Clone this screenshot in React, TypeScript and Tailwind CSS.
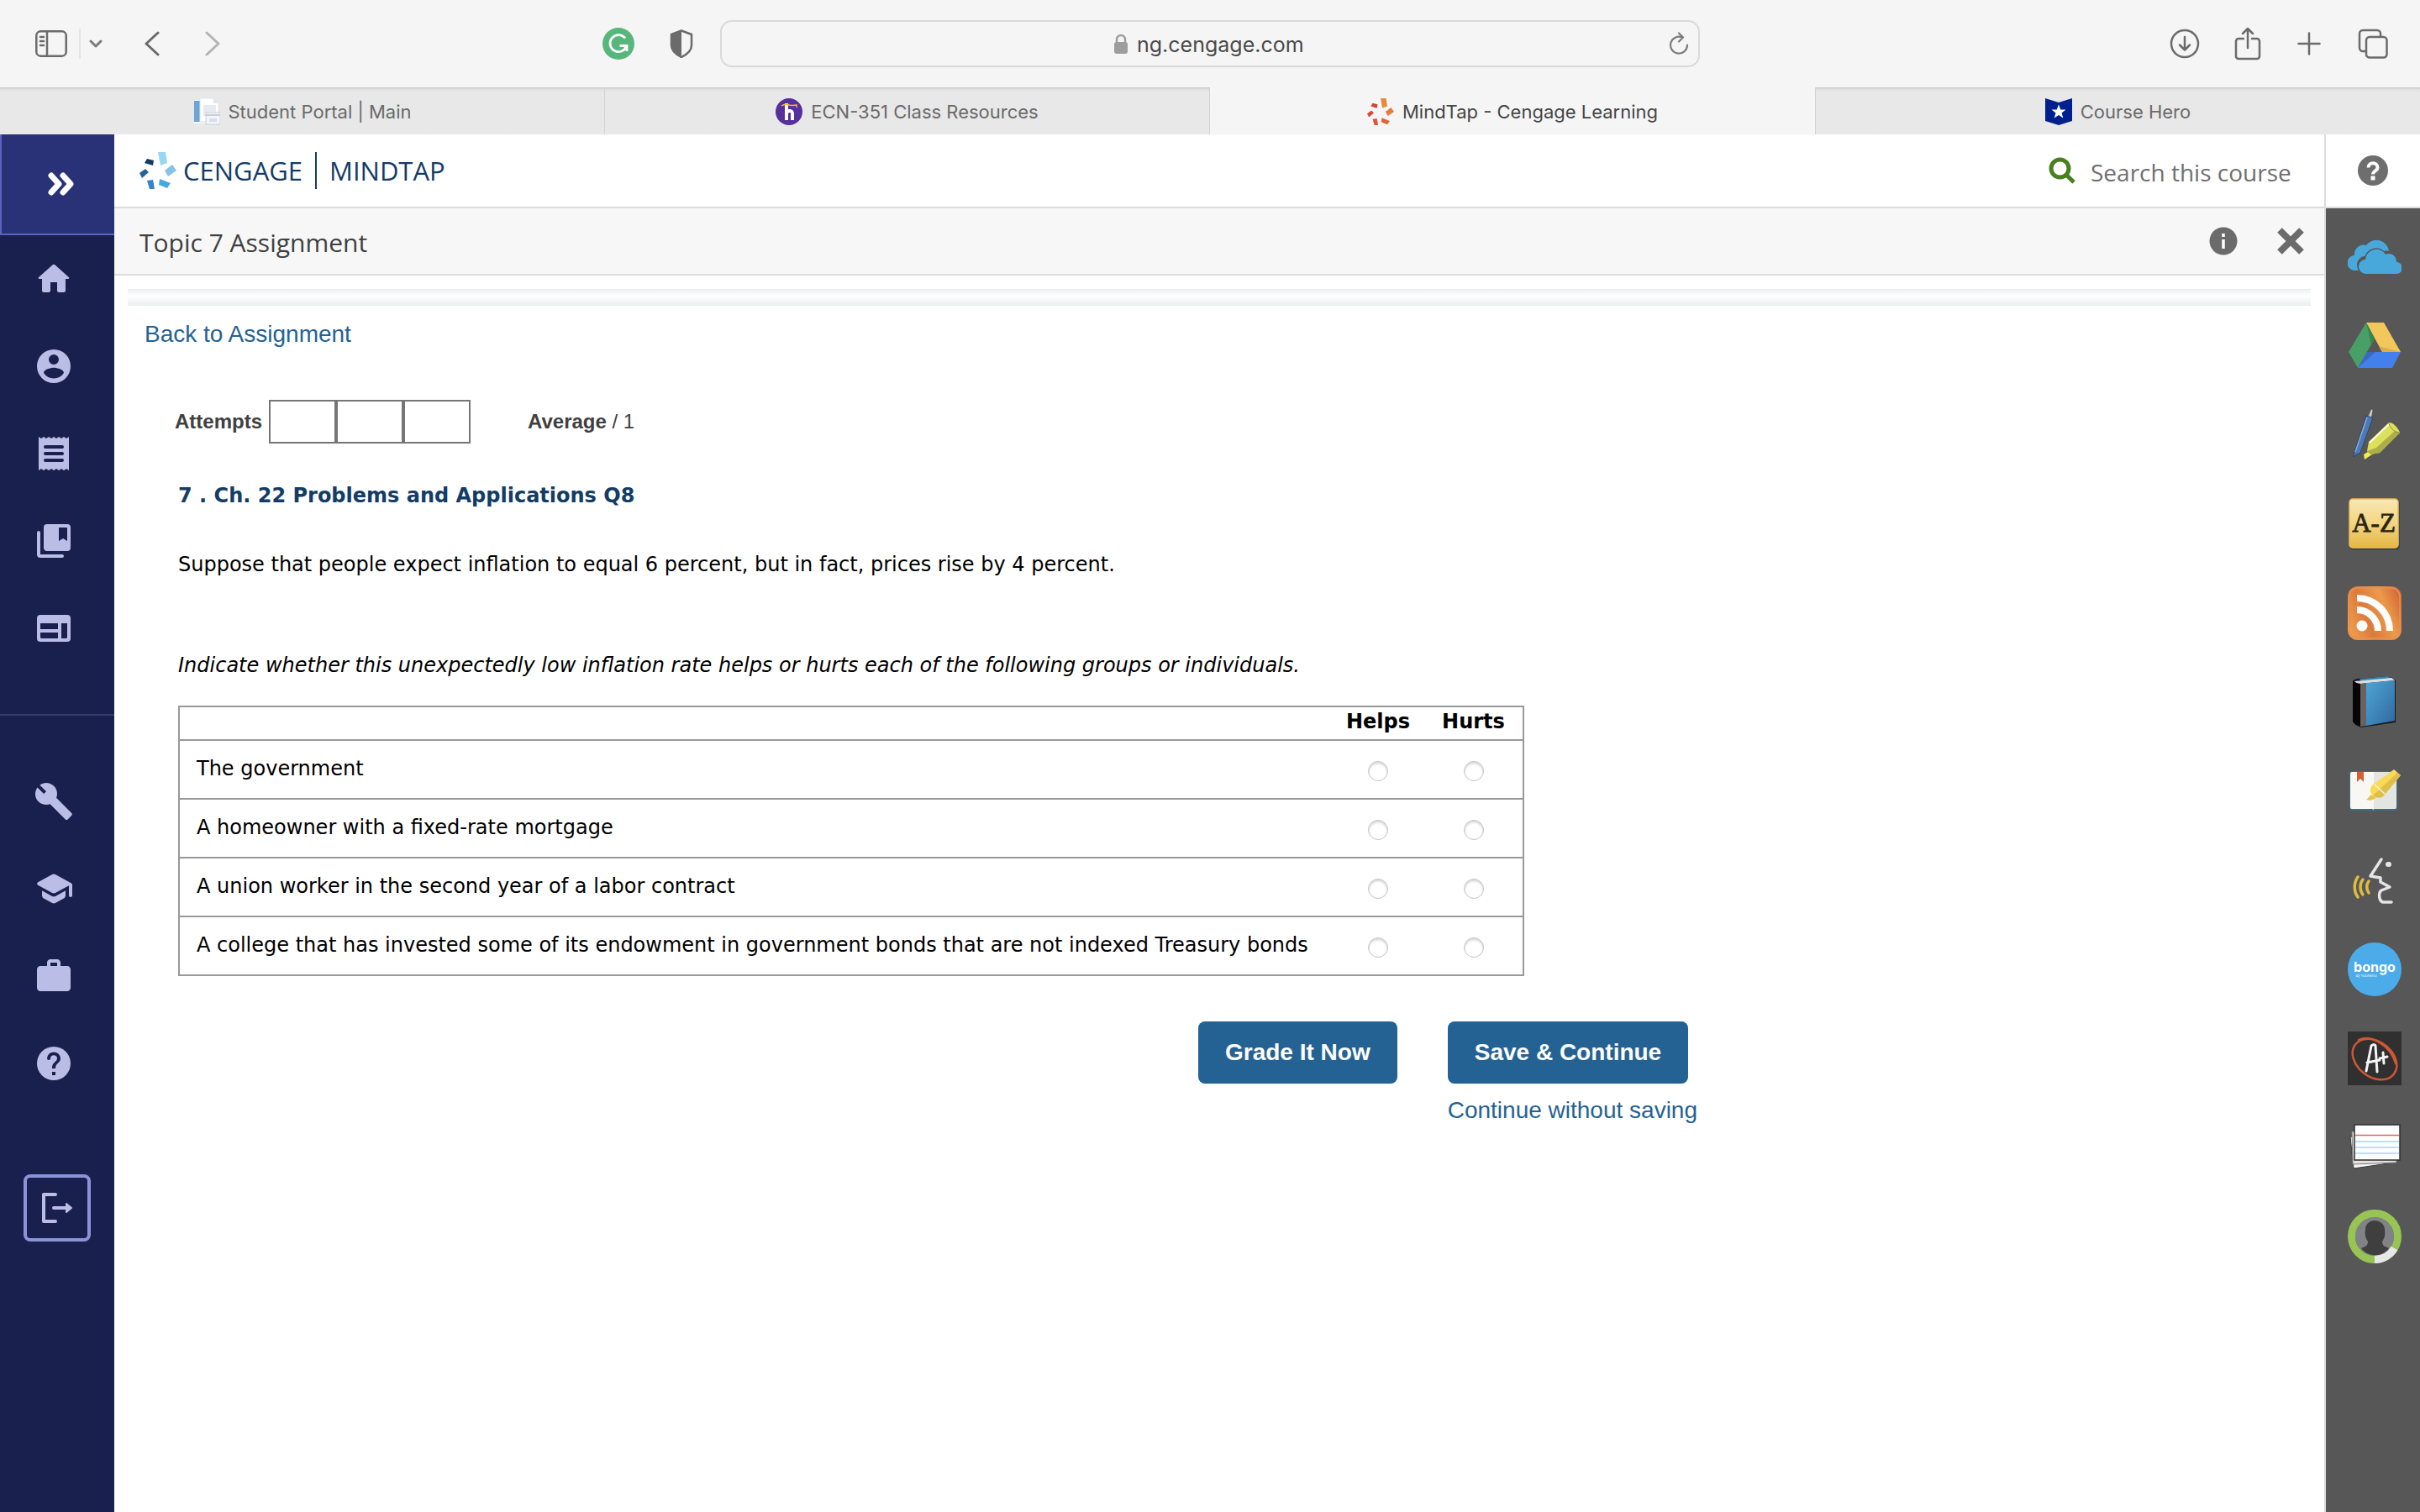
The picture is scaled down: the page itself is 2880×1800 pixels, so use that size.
import type { ReactNode } from "react";

const burst = [
  "22,0 31,0 33,13 25,16",
  "30,22 39,15 44,22 34,29",
  "24,32 37,37 33,43 23,39",
  "9,34 16,33 18,44 12,44",
  "0,25 7,20 11,24 3,31",
  "9,8 17,10 16,16 6,13",
];
const blueBurst = ["#97d7f5", "#83c3e5", "#46a9dd", "#3584c6", "#256497", "#133c66"];
const orangeBurst = ["#e8893f", "#e57b3c", "#de6636", "#e0553a", "#dc4a3a", "#d3413a"];

function Burst({ colors, className }: { colors: string[]; className: string }) {
  return (
    <svg viewBox="0 0 44 44" className={className} aria-hidden="true">
      {burst.map((points, i) => (
        <polygon key={points} points={points} fill={colors[i]} />
      ))}
    </svg>
  );
}

/* ---------- browser chrome ---------- */

function PortalFavicon() {
  return (
    <svg viewBox="0 0 32 32" className="size-8" aria-hidden="true">
      <rect x="1" y="2" width="24" height="28" fill="#f4f7fa" />
      <rect x="1" y="3" width="7" height="25" fill="#6aa5d6" />
      <path d="M8 0h16l6 6v22H8z" fill="#fff" stroke="#dfe3e8" />
      <path d="M24 0v6h6z" fill="#e3e7ec" />
      <rect x="12" y="8" width="15" height="13" fill="#e6eaf1" />
      <rect x="15" y="17" width="17" height="14" fill="#f3f5f9" stroke="#c9ced8" />
      <path d="M15 20h17" stroke="#c9ced8" strokeWidth="2" />
      <rect x="19" y="24" width="9" height="4" fill="#d9dee8" />
    </svg>
  );
}

function ClassFavicon() {
  return (
    <svg viewBox="0 0 32 32" className="size-8" aria-hidden="true">
      <circle cx="16" cy="16" r="16" fill="#56309b" />
      <path d="M13 6v20M13 18c1-4 7-4 7 0v8" fill="none" stroke="#fff" strokeWidth="4" />
      <path d="M7 9c3-2 6-2 9-1s6 0 9 0v3" fill="none" stroke="#f0b93a" strokeWidth="1.500" />
    </svg>
  );
}

function HeroFavicon() {
  return (
    <svg viewBox="0 0 32 32" className="size-8" aria-hidden="true">
      <path d="M0 0l16 5L32 0v27l-16 5L0 27z" fill="#00218d" />
      <path d="M16 7.500l2.300 6h6.200l-5 3.900 1.900 6.200L16 20l-5.400 3.600 1.900-6.200-5-3.900h6.200z" fill="#fff" />
    </svg>
  );
}

const tabs: { title: string; icon: ReactNode; active?: boolean }[] = [
  { title: "Student Portal | Main", icon: <PortalFavicon /> },
  { title: "ECN-351 Class Resources", icon: <ClassFavicon /> },
  { title: "MindTap - Cengage Learning", icon: <Burst colors={orangeBurst} className="size-8" />, active: true },
  { title: "Course Hero", icon: <HeroFavicon /> },
];

function BrowserBar() {
  return (
    <header className="bg-[#f5f5f5] font-['Inter',sans-serif]">
      <div className="grid h-[104px] grid-cols-[857px_minmax(0,1fr)_857px] items-center">
        <div className="flex items-center pl-[42px]">
          <button aria-label="Show sidebar">
            <svg viewBox="0 0 38 32" className="h-8 w-[38px]" fill="none" stroke="#6b6b6b" strokeWidth="2.500" strokeLinecap="round">
              <rect x="1.300" y="1.300" width="35.400" height="29.400" rx="5" />
              <path d="M14 2v28M6 8h4M6 13h4M6 18h4" />
            </svg>
          </button>
          <span className="ml-[14px] h-9 w-[2px] bg-[#e4e4e4]" />
          <button aria-label="Sidebar menu" className="ml-[10px]">
            <svg viewBox="0 0 16 10" className="h-[10px] w-4" fill="none" stroke="#7b7b7b" strokeWidth="3" strokeLinecap="round" strokeLinejoin="round">
              <path d="M2 2l6 6 6-6" />
            </svg>
          </button>
          <button aria-label="Back" className="ml-[50px]">
            <svg viewBox="0 0 18 30" className="h-[30px] w-[18px]" fill="none" stroke="#6b6b6b" strokeWidth="3" strokeLinecap="round" strokeLinejoin="round">
              <path d="M16 2L2 15l14 13" />
            </svg>
          </button>
          <button aria-label="Forward" className="ml-[54px]">
            <svg viewBox="0 0 18 30" className="h-[30px] w-[18px]" fill="none" stroke="#b4b4b4" strokeWidth="3" strokeLinecap="round" strokeLinejoin="round">
              <path d="M2 2l14 13L2 28" />
            </svg>
          </button>
          <button aria-label="Grammar extension" className="ml-auto">
            <svg viewBox="0 0 38 38" className="size-[38px]">
              <circle cx="19" cy="19" r="19" fill="#57b67b" />
              <path d="M27 12.500A10 10 0 1 0 28.500 22M20.500 21.500H29V28" fill="none" stroke="#fff" strokeWidth="2.800" />
            </svg>
          </button>
          <button aria-label="Privacy report" className="mr-8 ml-[42px]">
            <svg viewBox="0 0 28 34" className="h-[34px] w-7">
              <path d="M14 1.500L2 6v13c0 6 6 11 12 14 6-3 12-8 12-14V6z" fill="none" stroke="#6b6b6b" strokeWidth="2.500" strokeLinejoin="round" />
              <path d="M14 1L1.500 6v13c0 6 6 11 12.500 14z" fill="#6b6b6b" />
            </svg>
          </button>
        </div>
        <div className="flex h-14 items-center rounded-[14px] border-2 border-[#d9d9d9] pr-[10px]">
          <label className="flex flex-1 items-center justify-center gap-[10px] pl-9">
            <svg viewBox="0 0 18 24" className="h-6 w-[18px]" aria-hidden="true">
              <path d="M4 11V7a5 5 0 0 1 10 0v4" fill="none" stroke="#9d9d9d" strokeWidth="2.500" />
              <rect x="1" y="10" width="16" height="14" rx="3" fill="#9d9d9d" />
            </svg>
            <input aria-label="Address" defaultValue="ng.cengage.com" className="w-[202px] bg-transparent pt-[2px] text-[25px] leading-8 text-[#4a4a4a] outline-none" />
          </label>
          <button aria-label="Reload">
            <svg viewBox="0 0 26 28" className="h-7 w-[26px]" fill="none" stroke="#7d7d7d" strokeWidth="2.200" strokeLinecap="round" strokeLinejoin="round">
              <path d="M17 6.500A10 10 0 1 0 23 15.500M13 1.500l5 5-5 5" />
            </svg>
          </button>
        </div>
        <div className="flex items-center justify-end pr-[38px]">
          <button aria-label="Downloads">
            <svg viewBox="0 0 36 36" className="size-9" fill="none" stroke="#6b6b6b" strokeWidth="2.500" strokeLinecap="round" strokeLinejoin="round">
              <circle cx="18" cy="18" r="16" />
              <path d="M18 10v15M12 19.500l6 6 6-6" />
            </svg>
          </button>
          <button aria-label="Share" className="ml-[41px]">
            <svg viewBox="0 0 32 40" className="h-10 w-8" fill="none" stroke="#6b6b6b" strokeWidth="2.500" strokeLinecap="round" strokeLinejoin="round">
              <path d="M11 14H5a3 3 0 0 0-3 3v18a3 3 0 0 0 3 3h22a3 3 0 0 0 3-3V17a3 3 0 0 0-3-3h-6M16 25V2M10 8l6-6 6 6" />
            </svg>
          </button>
          <button aria-label="New tab" className="ml-[43px]">
            <svg viewBox="0 0 28 28" className="size-7" stroke="#6b6b6b" strokeWidth="2.500" strokeLinecap="round">
              <path d="M14 1.500v25M1.500 14h25" />
            </svg>
          </button>
          <button aria-label="Tab overview" className="ml-11">
            <svg viewBox="0 0 36 36" className="size-9" fill="none" stroke="#6b6b6b" strokeWidth="2.500">
              <rect x="10" y="10" width="24.500" height="24.500" rx="4" />
              <path d="M10 27H6a4 4 0 0 1-4-4V6a4 4 0 0 1 4-4h17a4 4 0 0 1 4 4v4" />
            </svg>
          </button>
        </div>
      </div>
      <nav aria-label="Tabs" className="grid h-14 grid-cols-4">
        {tabs.map((t) => (
          <button
            key={t.title}
            className={
              t.active
                ? "flex items-center justify-center gap-[10px] pt-[2px] text-[22px] leading-8 text-[#454545]"
                : "flex items-center justify-center gap-[10px] border-r border-[#d2d2d2] bg-[#e8e8e8] bg-linear-to-b from-[#c6c6c6] from-0% via-[#e0e0e0] via-4% to-[#e8e8e8] to-10% pt-[2px] text-[22px] leading-8 text-[#6a6a6a] last:border-r-0 last:border-l"
            }
          >
            {t.icon}
            {t.title}
          </button>
        ))}
      </nav>
    </header>
  );
}

/* ---------- left navigation ---------- */

const mainNav = [
  {
    label: "Home",
    d: "M10 19v-5h4v5c0 .55.45 1 1 1h3c.55 0 1-.45 1-1v-7h1.700c.46 0 .68-.57.33-.87L12.670 3.600c-.38-.34-.96-.34-1.340 0l-8.360 7.530c-.34.3-.13.87.33.87H5v7c0 .55.45 1 1 1h3c.55 0 1-.45 1-1z",
  },
  {
    label: "Profile",
    d: "M12 2a10 10 0 1 0 0 20a10 10 0 0 0 0-20zm0 3a3 3 0 1 1 0 6a3 3 0 0 1 0-6zm0 14.200a7.200 7.200 0 0 1-6-3.220c.03-1.990 4-3.080 6-3.080s5.970 1.090 6 3.080a7.200 7.200 0 0 1-6 3.220z",
  },
  {
    label: "Grades",
    d: "M3 2l1.500 1L6 2l1.500 1L9 2l1.500 1L12 2l1.500 1L15 2l1.500 1L18 2l1.500 1L21 2v20l-1.500-1-1.500 1-1.500-1-1.500 1-1.500-1-1.500 1-1.500-1L9 22l-1.500-1L6 22l-1.500-1L3 22zM7 7a1 1 0 0 0 0 2h10a1 1 0 0 0 0-2zm0 4a1 1 0 0 0 0 2h10a1 1 0 0 0 0-2zm0 4a1 1 0 0 0 0 2h10a1 1 0 0 0 0-2z",
  },
  {
    label: "Library",
    d: "M3 6a1 1 0 0 1 1 1v13h13a1 1 0 0 1 0 2H4a2 2 0 0 1-2-2V7a1 1 0 0 1 1-1zM8 2h12a2 2 0 0 1 2 2v12a2 2 0 0 1-2 2H8a2 2 0 0 1-2-2V4a2 2 0 0 1 2-2zm7 2v8l2.500-1.500L20 12V4z",
  },
  {
    label: "Dashboard",
    d: "M4 4h16a2 2 0 0 1 2 2v12a2 2 0 0 1-2 2H4a2 2 0 0 1-2-2V6a2 2 0 0 1 2-2zm0 5v3.500h10.500V9zm0 5.500V17.500l.5.5h10v-3.500zM16.500 9v9H19.500l.5-.5V9z",
  },
];

const toolNav = [
  {
    label: "Tools",
    d: "M22.610 18.990l-9.080-9.080c.93-2.340.45-5.100-1.440-7C9.790.61 6.210.4 3.660 2.260L7.500 6.110 6.080 7.520 2.250 3.690C.39 6.230.6 9.820 2.900 12.110c1.860 1.860 4.570 2.350 6.890 1.480l9.110 9.110c.39.39 1.020.39 1.410 0l2.300-2.300c.4-.38.4-1.010 0-1.410z",
  },
  {
    label: "College success",
    d: "M5 13.180v2.810c0 .73.4 1.410 1.040 1.760l5 2.730c.6.33 1.320.33 1.920 0l5-2.730c.64-.35 1.040-1.030 1.040-1.760v-2.810l-6.040 3.300c-.6.33-1.320.33-1.920 0L5 13.180zm6.040-9.660l-8.430 4.600c-.69.38-.69 1.380 0 1.760l8.430 4.600c.6.33 1.320.33 1.920 0L21 10.090V16c0 .55.45 1 1 1s1-.45 1-1V9.590c0-.37-.2-.7-.52-.88l-9.520-5.190a2.040 2.040 0 0 0-1.920 0z",
  },
  {
    label: "Career center",
    d: "M20 6h-4V4c0-1.110-.89-2-2-2h-4c-1.110 0-2 .89-2 2v2H4c-1.110 0-2 .89-2 2v11c0 1.110.89 2 2 2h16c1.110 0 2-.89 2-2V8c0-1.110-.89-2-2-2zm-6 0h-4V4h4v2z",
  },
  {
    label: "Help",
    d: "M12 2a10 10 0 1 0 0 20a10 10 0 0 0 0-20zm1 17h-2v-2h2v2zm2.070-7.750l-.9.920C13.450 12.900 13 13.500 13 15h-2v-.5c0-1.100.45-2.100 1.170-2.830l1.240-1.260c.37-.36.59-.86.59-1.410a2 2 0 0 0-3.990 0a1 1 0 0 1-2 0a4 4 0 0 1 7.990 0c0 .88-.36 1.680-.93 2.250z",
  },
];

function NavButton({ label, d }: { label: string; d: string }) {
  return (
    <button aria-label={label} className="flex h-[104px] w-full items-center pl-10">
      <svg viewBox="0 0 24 24" className="size-12" fill="#babde5" fillRule="evenodd">
        <path d={d} />
      </svg>
    </button>
  );
}

function SideNav() {
  return (
    <nav aria-label="Course" className="flex w-[136px] shrink-0 flex-col bg-[#1a204e]">
      <button aria-label="Expand navigation" className="flex h-[120px] items-center border-b-2 border-l-2 border-[#5a63bf] bg-[#293277] pl-[53px]">
        <svg viewBox="0 0 34 32" className="h-8 w-[34px]" fill="none" stroke="#fff" strokeWidth="7" strokeLinecap="round" strokeLinejoin="round">
          <path d="M6 6l9 10L6 26M20 6l9 10-9 10" />
        </svg>
      </button>
      {mainNav.map((n) => (
        <NavButton key={n.label} {...n} />
      ))}
      <hr className="mt-[50px] mb-[50px] border-t-2 border-[#343b6c]" />
      {toolNav.map((n) => (
        <NavButton key={n.label} {...n} />
      ))}
      <button aria-label="Log out" className="mt-20 flex size-20 items-center justify-center self-center rounded-lg border-4 border-[#8d93d9]">
        <svg viewBox="0 0 40 40" className="size-10" fill="none" stroke="#babde5" strokeWidth="4" strokeLinecap="round" strokeLinejoin="round">
          <path d="M18 4H4v32h14M16 20h17" />
          <path d="M31 15l6 5-6 5z" fill="#babde5" strokeWidth="2" />
        </svg>
      </button>
    </nav>
  );
}

/* ---------- right tool rail ---------- */

const rail: { label: string; art: ReactNode }[] = [
  {
    label: "OneDrive",
    art: (
      <>
        <path d="M9 48a9 9 0 0 1-1-18a11 11 0 0 1 14-12a15 15 0 0 1 27 7c-3-1-5 0-6 0a15 15 0 0 0-21 6a10 10 0 0 0-8 17z" fill="#48a8dc" />
        <path d="M22 52a8 8 0 0 1-1-17a13 13 0 0 1 24-6c6-3 13 1 13 9a7 7 0 0 1 0 14z" fill="#48a8dc" stroke="#575757" strokeWidth="3" paintOrder="stroke" />
      </>
    ),
  },
  {
    label: "Google Drive",
    art: (
      <>
        <path d="M22 4h21l20 35H41z" fill="#f3c75c" />
        <path d="M63 39H41l-4-7z" fill="#dcae4d" />
        <path d="M22 4L1 39l11 19 20-35z" fill="#48a066" />
        <path d="M22 4l10 19-4 7z" fill="#388350" />
        <path d="M23 39h40L53 58H12z" fill="#4480ec" />
        <path d="M23 39h10L12 58z" fill="#3b69c0" />
      </>
    ),
  },
  {
    label: "Highlights and notes",
    art: (
      <>
        <path d="M24 10l4-9 2 1-2 10z" fill="#cfcfcf" stroke="#444" strokeWidth="0.500" />
        <path d="M22 9l8 2-15 42-6 3-2 2 1-6z" fill="#4c7ab8" stroke="#2c3c55" strokeWidth="0.800" />
        <path d="M23 11L9 52" stroke="#86aad6" strokeWidth="1.500" />
        <path d="M19 55l5-3 5 3-9 6z" fill="#f2ee52" />
        <path d="M25 40l24-23c4-1 11 6 13 12L38 53l-11 2-4-4z" fill="#dde05c" />
        <path d="M38 53l24-24-6-2-22 20-11 4 4 4z" fill="#adae45" />
        <path d="M26 41l23-22" stroke="#fbfbe6" strokeWidth="2" />
        <path d="M49 18c1 5 6 10 12 11" fill="none" stroke="#8b8c34" strokeWidth="1" />
      </>
    ),
  },
  {
    label: "Dictionary",
    art: (
      <>
        <rect x="3" y="4" width="59" height="59" rx="4" fill="#3b3b3b" opacity="0.600" />
        <rect x="2" y="2" width="58" height="58" rx="4" fill="url(#gold)" stroke="#edbe58" strokeWidth="1.500" />
        <text x="31" y="41" textAnchor="middle" fontFamily="Liberation Serif, serif" fontSize="31" fill="#2b2512" stroke="#2b2512" strokeWidth="0.800">
          A-Z
        </text>
      </>
    ),
  },
  {
    label: "RSS feed",
    art: (
      <>
        <rect width="64" height="64" rx="12" fill="url(#rss)" />
        <rect x="2" y="2" width="60" height="60" rx="10" fill="none" stroke="#e59152" strokeWidth="1.500" />
        <circle cx="17" cy="47" r="6.500" fill="#fff" />
        <path d="M11 28a25 25 0 0 1 25 25M11 14a39 39 0 0 1 39 39" fill="none" stroke="#fff" strokeWidth="8" />
      </>
    ),
  },
  {
    label: "eBook",
    art: (
      <>
        <path d="M6 6l5-2 37-3 9 5v50L16 62l-7-3-3-4z" fill="#1a1a1a" />
        <path d="M14 4l34-3 4 3-36 3z" fill="#2f86b8" />
        <path d="M8 7l44-4 4 3-40 4-6-1z" fill="#dcdcdc" />
        <path d="M15 10l7-1v51l-7 1z" fill="#686260" />
        <path d="M22 9l34-3v48l-34 6z" fill="url(#book)" />
        <path d="M6 7l9 4v50l-6-3-3-3z" fill="#060606" />
      </>
    ),
  },
  {
    label: "Notebook",
    art: (
      <>
        <rect x="2" y="8" width="57" height="47" rx="3" fill="#3f6f7e" />
        <path d="M27 53h8l-4 4z" fill="#3f6f7e" />
        <path d="M5 9h26v45l-2-1H5a2 2 0 0 1-2-2V11a2 2 0 0 1 2-2z" fill="#f8f7f4" />
        <path d="M31 9h25a2 2 0 0 1 2 2v40a2 2 0 0 1-2 2H31z" fill="#e3e6e0" />
        <path d="M11 9h8v12l-4-4-4 4z" fill="#d06136" />
        <path d="M55 6l8 7-20 24c-3 4-10 3-14-1s-2-9 1-12z" fill="#fbd957" />
        <path d="M59 10l4 3-20 24c-3 4-10 3-13 0z" fill="#dfbf4c" />
        <path d="M22 42l6-6 6 4-7 3z" fill="#e6c54e" />
        <path d="M32 24l12 11" stroke="#f4f2e8" strokeWidth="1.500" />
      </>
    ),
  },
  {
    label: "ReadSpeaker",
    art: (
      <>
        <g fill="none" stroke="#e4e4e4" strokeWidth="3.500" strokeLinecap="round" strokeLinejoin="round">
          <path d="M40 7L27 27l12 2v5l11 6-10 4c-4 3-3 14 3 14h9" />
          <path d="M48 13h1" strokeWidth="6" />
        </g>
        <path d="M12 28c-5 7-5 17 0 24M18 31c-4 5-4 13 0 18M25 33c-3 4-3 10 0 14" fill="none" stroke="#dfbb42" strokeWidth="3.500" strokeLinecap="round" />
      </>
    ),
  },
  {
    label: "Bongo",
    art: (
      <>
        <circle cx="32" cy="32" r="32" fill="#4bace9" />
        <text x="32" y="35" textAnchor="middle" fontFamily="Inter, sans-serif" fontWeight="700" fontSize="16" fill="#fff">
          bongo
        </text>
        <text x="22" y="41" textAnchor="middle" fontFamily="Inter, sans-serif" fontSize="4" fill="#fff">
          by YOUSEEU
        </text>
      </>
    ),
  },
  {
    label: "Grades",
    art: (
      <>
        <rect width="64" height="64" fill="#303030" />
        <g fill="none" stroke="#cf5733" strokeWidth="2.500" strokeLinecap="round">
          <ellipse cx="32" cy="33" rx="29" ry="21" transform="rotate(38 32 33)" />
          <path d="M13 10c14-7 38 6 44 28" />
        </g>
        <path d="M22 47l6-30q4-3 5 0l2 31M23 37l15-3M38 32l9-2M42 25l1 13" fill="none" stroke="#f4f4f4" strokeWidth="3" strokeLinecap="round" />
      </>
    ),
  },
  {
    label: "Flashcards",
    art: (
      <>
        <path d="M3 19l50-5 5 31-51 8z" fill="#f1f1f1" stroke="#3b3b3b" strokeWidth="1" />
        <path d="M3 19l4 38 48-7V20z" fill="#f6f6f6" stroke="#3b3b3b" strokeWidth="1" />
        <path d="M5 13h53v37l-52 2z" fill="#e3e2dd" stroke="#777" strokeWidth="1" />
        <rect x="8" y="5" width="54" height="42" fill="#fff" stroke="#2e2e2e" strokeWidth="1.500" />
        <path d="M9 17.500h52" stroke="#d9666a" strokeWidth="1.500" />
        <path d="M9 25h52M9 32h52M9 39h52" stroke="#a5d5ef" strokeWidth="1.500" />
      </>
    ),
  },
  {
    label: "My profile",
    art: (
      <>
        <circle cx="32" cy="32" r="23" fill="#808285" />
        <path d="M16 46c5-2 8-3 8-8-3-4-4-9-3-14 0-7 5-11 11-11s12 4 12 11c1 5 0 10-3 14 0 5 3 6 8 8-8 11-25 11-33 0z" fill="#3f3f3f" />
        <circle cx="32" cy="32" r="27.500" fill="none" stroke="#98c455" strokeWidth="9" />
        <path d="M32 59.500A27.500 27.500 0 0 0 55.500 46" fill="none" stroke="#e6e7e9" strokeWidth="9" />
      </>
    ),
  },
];

function ToolRail() {
  return (
    <aside aria-label="Course tools" className="flex w-[114px] shrink-0 flex-col border-l-2 border-[#dcdcdc]">
      <button aria-label="Help" className="flex h-[88px] items-center justify-center border-b-2 border-[#dcdcdc] bg-white">
        <svg viewBox="0 0 36 36" className="size-9">
          <circle cx="18" cy="18" r="18" fill="#6e6e6e" />
          <path d="M12.500 14.500c0-7 11-7 11 0c0 4-5.500 4-5.500 8" fill="none" stroke="#fff" strokeWidth="4" />
          <rect x="15.500" y="24.500" width="5" height="5" fill="#fff" />
        </svg>
      </button>
      <div className="flex flex-1 flex-col items-center bg-[#575757] pt-[5px] pl-1">
        <svg className="size-0" aria-hidden="true">
          <linearGradient id="gold" x1="0" y1="0" x2="0" y2="1">
            <stop offset="0" stopColor="#fae8b4" />
            <stop offset="0.500" stopColor="#f2d682" />
            <stop offset="1" stopColor="#e5b643" />
          </linearGradient>
          <linearGradient id="rss" x1="0" y1="0.700" x2="1" y2="0.300">
            <stop offset="0" stopColor="#ee9c4a" />
            <stop offset="0.350" stopColor="#dc7a3c" />
            <stop offset="0.700" stopColor="#ec9b4a" />
            <stop offset="1" stopColor="#d56b38" />
          </linearGradient>
          <linearGradient id="book" x1="0" y1="0" x2="1" y2="1">
            <stop offset="0" stopColor="#4ea5d6" />
            <stop offset="1" stopColor="#30699f" />
          </linearGradient>
        </svg>
        {rail.map((r) => (
          <button key={r.label} aria-label={r.label} className="flex h-[106px] items-center justify-center">
            <svg viewBox="0 0 64 64" className="size-16">
              {r.art}
            </svg>
          </button>
        ))}
      </div>
    </aside>
  );
}

/* ---------- assignment ---------- */

const rows = [
  "The government",
  "A homeowner with a fixed-rate mortgage",
  "A union worker in the second year of a labor contract",
  "A college that has invested some of its endowment in government bonds that are not indexed Treasury bonds",
];

function Question() {
  return (
    <table className="mt-8 w-[1602px] border-2 border-[#999]">
      <thead>
        <tr className="h-10">
          <td />
          <th scope="col" className="w-[114px] pb-1 text-center font-bold">
            Helps
          </th>
          <th scope="col" className="w-[116px] pr-[2px] pb-1 text-center font-bold">
            Hurts
          </th>
        </tr>
      </thead>
      <tbody>
        {rows.map((text, i) => (
          <tr key={text} className="h-[70px] border-t-2 border-[#999]">
            <th scope="row" className="pb-[2px] pl-5 text-left font-normal whitespace-nowrap">
              {text}
            </th>
            {["Helps", "Hurts"].map((choice) => (
              <td key={choice} className="pt-1 last:pr-[2px]">
                <input
                  type="radio"
                  name={`group-${i}`}
                  aria-label={`${text}: ${choice}`}
                  className="mx-auto block size-6 appearance-none rounded-full border border-[#c4c4c4] bg-white shadow-[inset_0_2px_3px_rgba(0,0,0,0.18)] checked:bg-[#246294]"
                />
              </td>
            ))}
          </tr>
        ))}
      </tbody>
    </table>
  );
}

function Course() {
  return (
    <div className="flex min-w-0 flex-1 flex-col bg-white">
      <div className="flex h-[88px] items-center justify-between border-b-2 border-[#dcdcdc] pr-[30px] pl-[30px] font-['Open_Sans',sans-serif]">
        <div className="flex items-center text-[31px] leading-10 text-[#133c66]">
          <Burst colors={blueBurst} className="size-11" />
          <span className="ml-2">CENGAGE</span>
          <span className="mr-[15px] ml-[15px] h-11 w-[2px] bg-[#133c66]" />
          <span>MINDTAP</span>
        </div>
        <label className="flex items-center gap-[18px]">
          <svg viewBox="0 0 32 32" className="size-8" fill="none" stroke="#48801f" strokeWidth="5" aria-hidden="true">
            <circle cx="13.500" cy="13.500" r="10.500" />
            <path d="M21 21l9 9" />
          </svg>
          <input type="text" aria-label="Search this course" placeholder="Search this course" className="w-[248px] pt-1 text-[28px] leading-9 text-[#6f6f6f] outline-none placeholder:text-[#6f6f6f]" />
        </label>
      </div>
      <div className="flex h-20 items-center border-b-2 border-[#dcdcdc] bg-[#f7f7f7] pr-6 pl-[30px]">
        <h1 className="flex-1 pt-1 font-['Open_Sans',sans-serif] text-[30px] leading-10 text-[#404040]">Topic 7 Assignment</h1>
        <button aria-label="Information">
          <svg viewBox="0 0 34 34" className="size-[34px]">
            <circle cx="17" cy="17" r="16.500" fill="#6b6b6b" />
            <path d="M17 8v4M17 15v11" stroke="#fff" strokeWidth="3.500" />
          </svg>
        </button>
        <button aria-label="Close" className="ml-[47px]">
          <svg viewBox="0 0 32 32" className="size-8" stroke="#6b6b6b" strokeWidth="8">
            <path d="M3 3l26 26M29 3L3 29" />
          </svg>
        </button>
      </div>
      <div className="mx-4 mt-4 h-5 bg-linear-to-b from-[#e9eeee] from-0% via-white via-40% to-[#eaeeef]" />
      <main className="px-9 font-['Liberation_Sans',sans-serif]">
        <a href="#assignment" className="mt-4 inline-block text-[28px] leading-9 text-[#246294]">
          Back to Assignment
        </a>
        <div className="mt-15 flex items-center pl-9 text-[24px] leading-8 text-[#404040]">
          <span className="font-bold">Attempts</span>
          <div className="ml-2 flex">
            {[1, 2, 3].map((n) => (
              <span key={n} className="h-[52px] w-20 border-2 border-[#757575]" />
            ))}
          </div>
          <span className="ml-[68px]">
            <b>Average</b> / 1
          </span>
        </div>
        <section className="pl-10 font-['DejaVu_Sans',sans-serif] text-[24px] leading-8 text-black">
          <h2 className="mt-[46px] font-bold text-[#133c66]">7 . Ch. 22 Problems and Applications Q8</h2>
          <p className="mt-[50px]">Suppose that people expect inflation to equal 6 percent, but in fact, prices rise by 4 percent.</p>
          <p className="mt-[88px] italic">
            Indicate whether this unexpectedly low inflation rate helps or hurts each of the following groups or individuals.
          </p>
          <Question />
        </section>
        <div className="mt-[54px] flex items-start gap-[60px] pl-[1254px] text-[28px] leading-9">
          <button className="h-[74px] rounded-lg bg-[#246294] px-8 font-bold text-white">Grade It Now</button>
          <div className="flex flex-col items-start">
            <button className="h-[74px] rounded-lg bg-[#246294] px-8 font-bold text-white">Save &amp; Continue</button>
            <a href="#continue" className="mt-[14px] text-[#246294]">
              Continue without saving
            </a>
          </div>
        </div>
      </main>
    </div>
  );
}

export default function App() {
  return (
    <div className="flex min-h-screen flex-col">
      <BrowserBar />
      <div className="flex flex-1">
        <SideNav />
        <Course />
        <ToolRail />
      </div>
    </div>
  );
}
